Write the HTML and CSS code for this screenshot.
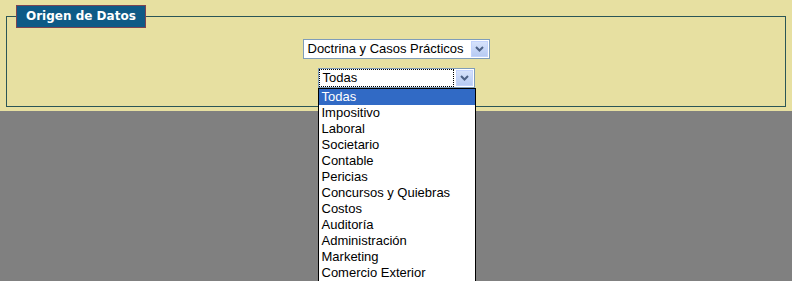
FILE: index.html
```html
<!DOCTYPE html>
<html lang="es">
<head>
<meta charset="utf-8">
<title>Origen de Datos</title>
<link rel="stylesheet" href="styles.css">
</head>
<body>
<div class="panel">
  <fieldset class="group">
    <legend class="group-title">Origen de Datos</legend>
    <div class="fields">
      <div class="select select-wide">
        <span class="select-text">Doctrina y Casos Prácticos</span>
        <span class="select-btn"><svg width="9" height="6" viewBox="0 0 9 6"><path d="M1 1 L4.5 4.5 L8 1" fill="none" stroke="#4d6185" stroke-width="2"/></svg></span>
      </div>
      <div class="select select-narrow open">
        <span class="select-text"><span class="focus">Todas</span></span>
        <span class="select-btn"><svg width="9" height="6" viewBox="0 0 9 6"><path d="M1 1 L4.5 4.5 L8 1" fill="none" stroke="#4d6185" stroke-width="2"/></svg></span>
        <ul class="options">
          <li class="option selected">Todas</li>
          <li class="option">Impositivo</li>
          <li class="option">Laboral</li>
          <li class="option">Societario</li>
          <li class="option">Contable</li>
          <li class="option">Pericias</li>
          <li class="option">Concursos y Quiebras</li>
          <li class="option">Costos</li>
          <li class="option">Auditoría</li>
          <li class="option">Administración</li>
          <li class="option">Marketing</li>
          <li class="option">Comercio Exterior</li>
        </ul>
      </div>
    </div>
  </fieldset>
</div>
</body>
</html>
```
FILE: styles.css
```css
html, body {
  margin: 0;
  padding: 0;
}
body {
  background: #808080;
  height: 281px;
  overflow: hidden;
  font-family: "Liberation Sans", Arial, sans-serif;
}
.panel {
  background: #e7e0a1;
  padding: 5px 6px 4px 6px;
}
.group {
  margin: 0;
  border: 1px solid #2b5656;
  padding: 11px 0 18px 0;
  min-width: 0;
}
.group-title {
  margin-left: 9px;
  padding: 0 9px 0 9px;
  background: #0e5a86;
  color: #ffffff;
  font-family: "DejaVu Sans", Verdana, sans-serif;
  font-weight: bold;
  font-size: 12px;
  line-height: 21px;
  height: 21px;
  border: 1px solid #7b4452;
  box-sizing: content-box;
}
.fields {
  display: flex;
  flex-direction: column;
  align-items: center;
  gap: 9px;
}
.select {
  position: relative;
  display: flex;
  align-items: stretch;
  height: 20px;
  box-sizing: border-box;
  background: #ffffff;
  border: 1px solid #7f9db9;
  font-size: 13px;
  color: #000;
}
.select-wide {
  width: 187px;
}
.select-narrow {
  width: 157px;
}
.select-text {
  flex: 1;
  padding-left: 4px;
  line-height: 18px;
  white-space: nowrap;
  overflow: hidden;
}
.focus {
  display: inline-block;
  outline: 1px dotted #000;
  outline-offset: 0;
  margin-left: -3px;
  padding-left: 3px;
  width: 130px;
  line-height: 16px;
}
.select-btn {
  width: 17px;
  margin: 1px;
  box-sizing: border-box;
  background: linear-gradient(#d6e2fb, #b7cbf3);
  border: 1px solid #c3d3fd;
  display: flex;
  align-items: center;
  justify-content: center;
}
.options {
  position: absolute;
  left: -1px;
  top: 19px;
  width: 158px;
  box-sizing: border-box;
  margin: 0;
  padding: 0;
  list-style: none;
  background: #ffffff;
  border: 1px solid #000000;
}
.option {
  height: 16px;
  line-height: 16px;
  padding-left: 3px;
  font-size: 13px;
  white-space: nowrap;
}
.option.selected {
  background: #316ac5;
  color: #ffffff;
}
```
